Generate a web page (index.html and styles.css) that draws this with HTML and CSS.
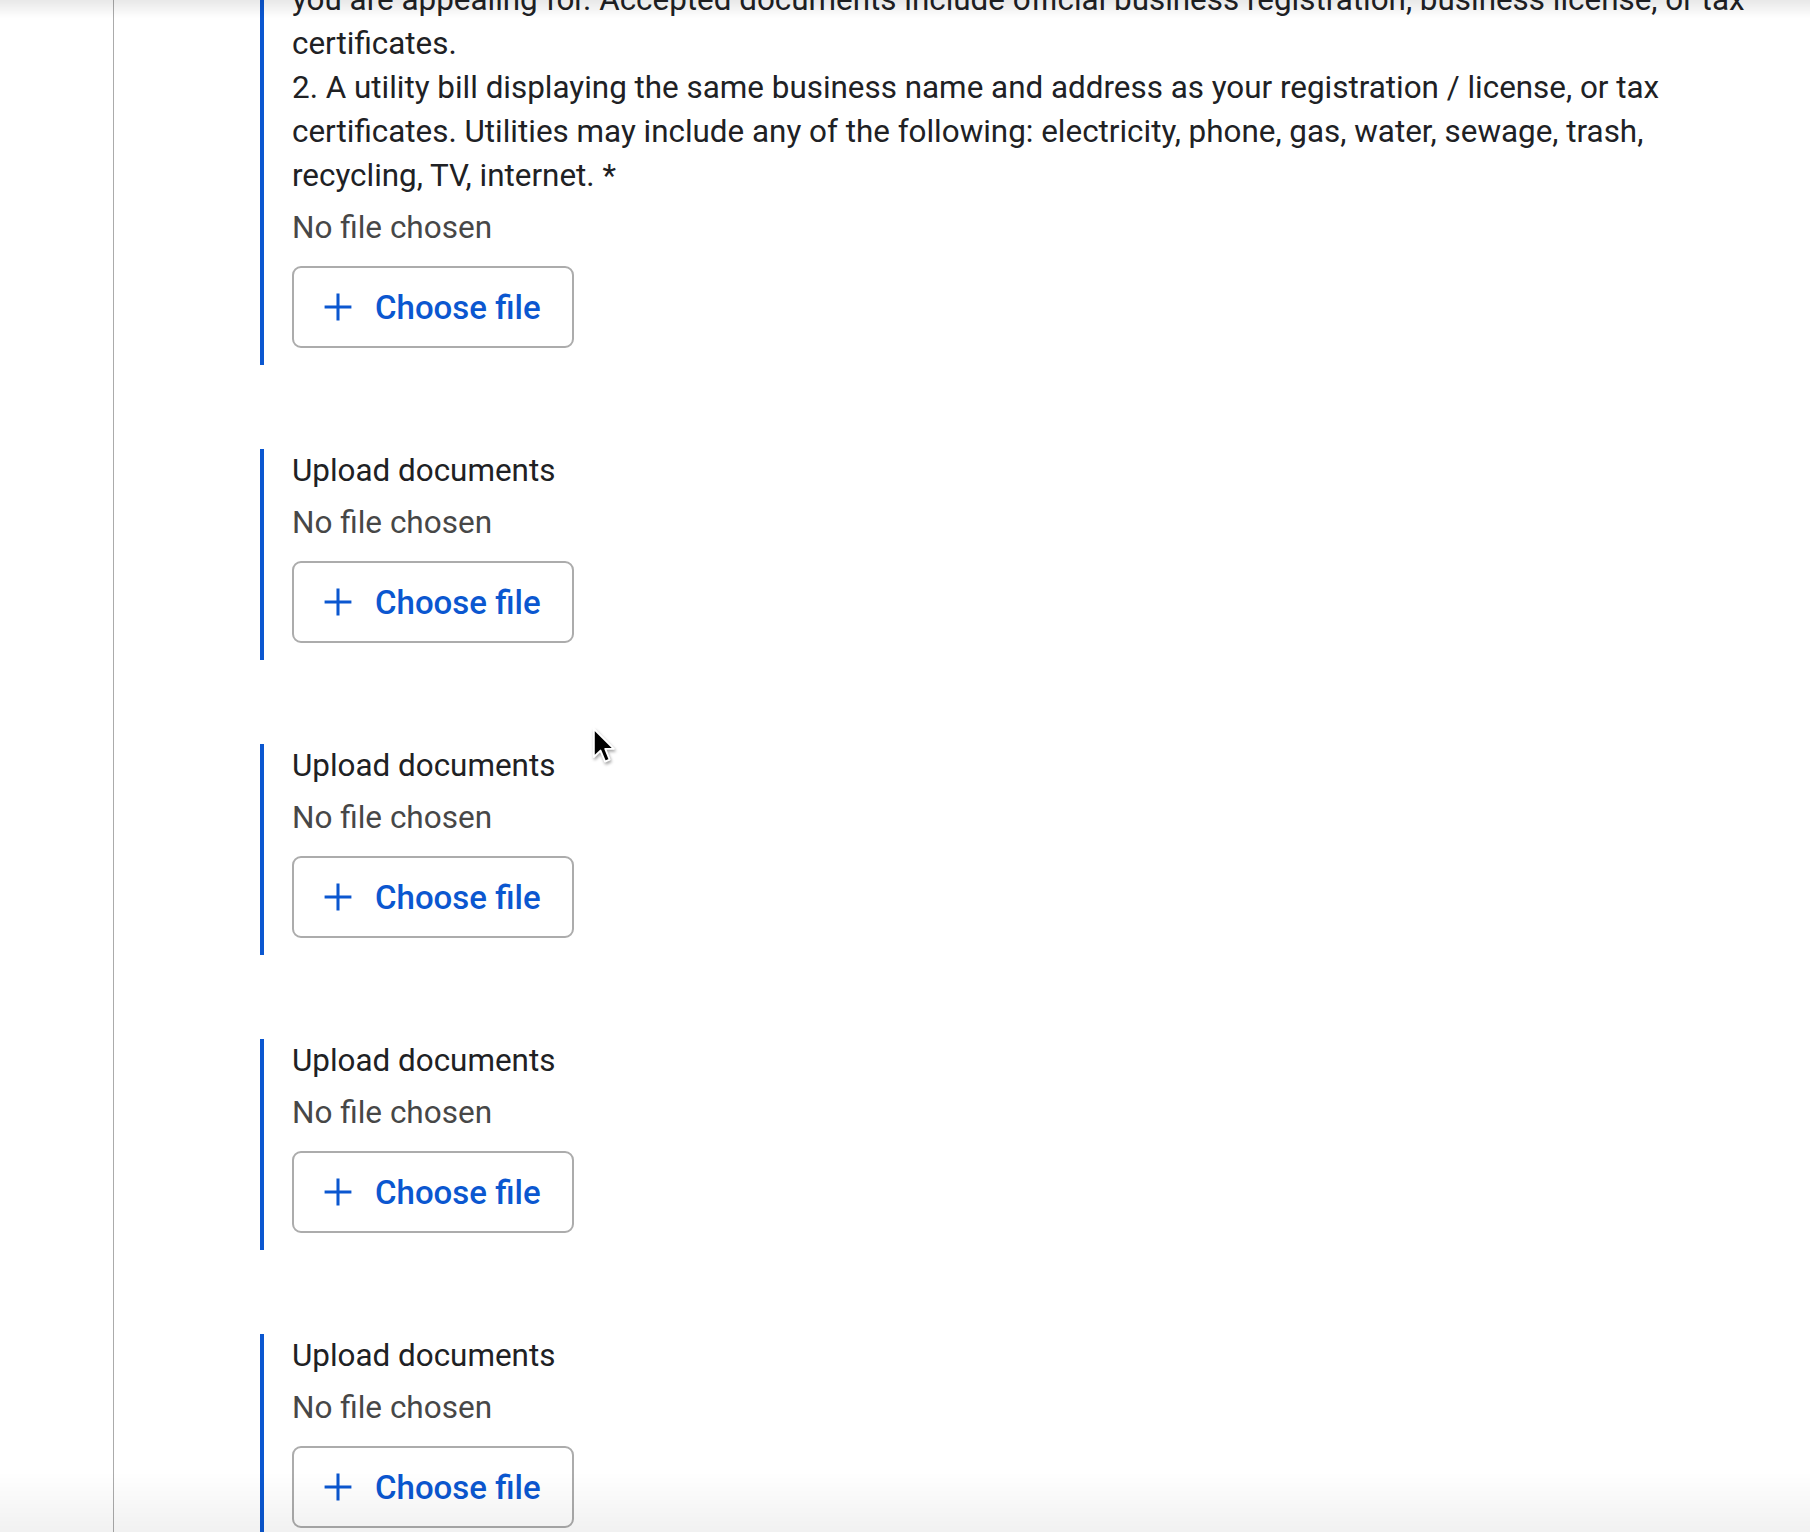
FILE: index.html
```html
<!DOCTYPE html>
<html lang="en">
<head>
<meta charset="utf-8">
<title>Upload documents</title>
<link rel="stylesheet" href="styles.css">
</head>
<body>
<div class="page">
  <aside class="sidebar"></aside>
  <main class="main">
    <div class="questions">
      <section class="question first">
        <div class="title">you are appealing for. Accepted documents include official business registration, business license, or tax certificates.<br>2. A utility bill displaying the same business name and address as your registration / license, or tax certificates. Utilities may include any of the following: electricity, phone, gas, water, sewage, trash, recycling, TV, internet. *</div>
        <div class="status">No file chosen</div>
        <button class="choose" type="button"><svg class="plus" viewBox="0 0 24 24" aria-hidden="true"><path d="M12 0.5v23M0.5 12h23"/></svg><span>Choose file</span></button>
      </section>
      <section class="question">
        <div class="title">Upload documents</div>
        <div class="status">No file chosen</div>
        <button class="choose" type="button"><svg class="plus" viewBox="0 0 24 24" aria-hidden="true"><path d="M12 0.5v23M0.5 12h23"/></svg><span>Choose file</span></button>
      </section>
      <section class="question">
        <div class="title">Upload documents</div>
        <div class="status">No file chosen</div>
        <button class="choose" type="button"><svg class="plus" viewBox="0 0 24 24" aria-hidden="true"><path d="M12 0.5v23M0.5 12h23"/></svg><span>Choose file</span></button>
      </section>
      <section class="question">
        <div class="title">Upload documents</div>
        <div class="status">No file chosen</div>
        <button class="choose" type="button"><svg class="plus" viewBox="0 0 24 24" aria-hidden="true"><path d="M12 0.5v23M0.5 12h23"/></svg><span>Choose file</span></button>
      </section>
      <section class="question">
        <div class="title">Upload documents</div>
        <div class="status">No file chosen</div>
        <button class="choose" type="button"><svg class="plus" viewBox="0 0 24 24" aria-hidden="true"><path d="M12 0.5v23M0.5 12h23"/></svg><span>Choose file</span></button>
      </section>
    </div>
  </main>
</div>
<div class="shade-top"></div>
<div class="shade-bottom"></div>
<svg class="cursor" viewBox="0 0 13 21" aria-hidden="true"><path d="M1 1 L1 17 L4.8 13.4 L7.4 19.6 L10 18.5 L7.5 12.4 L12.4 12.4 Z" fill="#000" stroke="#fff" stroke-width="1.1" stroke-linejoin="round"/></svg>
</body>
</html>
```
FILE: styles.css
```css
html, body {
  margin: 0;
  padding: 0;
  background: #ffffff;
  overflow: hidden;
}

body {
  font-family: Roboto, "Liberation Sans", Arial, sans-serif;
  color: #202124;
  height: 1532px;
}

.page {
  display: flex;
  min-height: 1532px;
}

.sidebar {
  width: 113px;
  flex: none;
  border-right: 1px solid #ababab;
}

.main {
  flex: 1;
  padding: 0 45px 0 146px;
}

.questions {
  display: flex;
  flex-direction: column;
  gap: 84px;
  margin-top: -22px;
}

.question {
  border-left: 4px solid #0b57d0;
  padding: 0 0 17px 28px;
}

.title {
  font-size: 31.4px;
  line-height: 44px;
  color: #202124;
}

.status {
  margin-top: 8px;
  font-size: 31.5px;
  line-height: 44px;
  color: #474747;
}

.choose {
  margin-top: 16px;
  box-sizing: border-box;
  width: 282px;
  height: 82px;
  display: flex;
  align-items: center;
  gap: 23px;
  padding: 0 0 0 30px;
  background: #fff;
  border: 2px solid #acacac;
  border-radius: 9px;
  font-family: Roboto, "Liberation Sans", Arial, sans-serif;
  font-size: 33px;
  font-weight: 500;
  color: #0b57d0;
  cursor: pointer;
}

.plus {
  width: 28px;
  height: 28px;
  flex: none;
}

.plus path {
  stroke: #0b57d0;
  stroke-width: 2.6;
  fill: none;
}

.shade-top {
  position: fixed;
  left: 0;
  top: 0;
  width: 100%;
  height: 18px;
  background: linear-gradient(to bottom, rgba(0, 0, 0, 0.09), rgba(0, 0, 0, 0));
  pointer-events: none;
}

.shade-bottom {
  position: fixed;
  left: 0;
  bottom: 0;
  width: 100%;
  height: 60px;
  background: linear-gradient(to bottom, rgba(0, 0, 0, 0), rgba(0, 0, 0, 0.055));
  pointer-events: none;
}

.cursor {
  position: fixed;
  left: 592px;
  top: 727px;
  width: 23px;
  height: 37px;
  filter: drop-shadow(1px 2px 1.5px rgba(0, 0, 0, 0.35));
  pointer-events: none;
}
```
